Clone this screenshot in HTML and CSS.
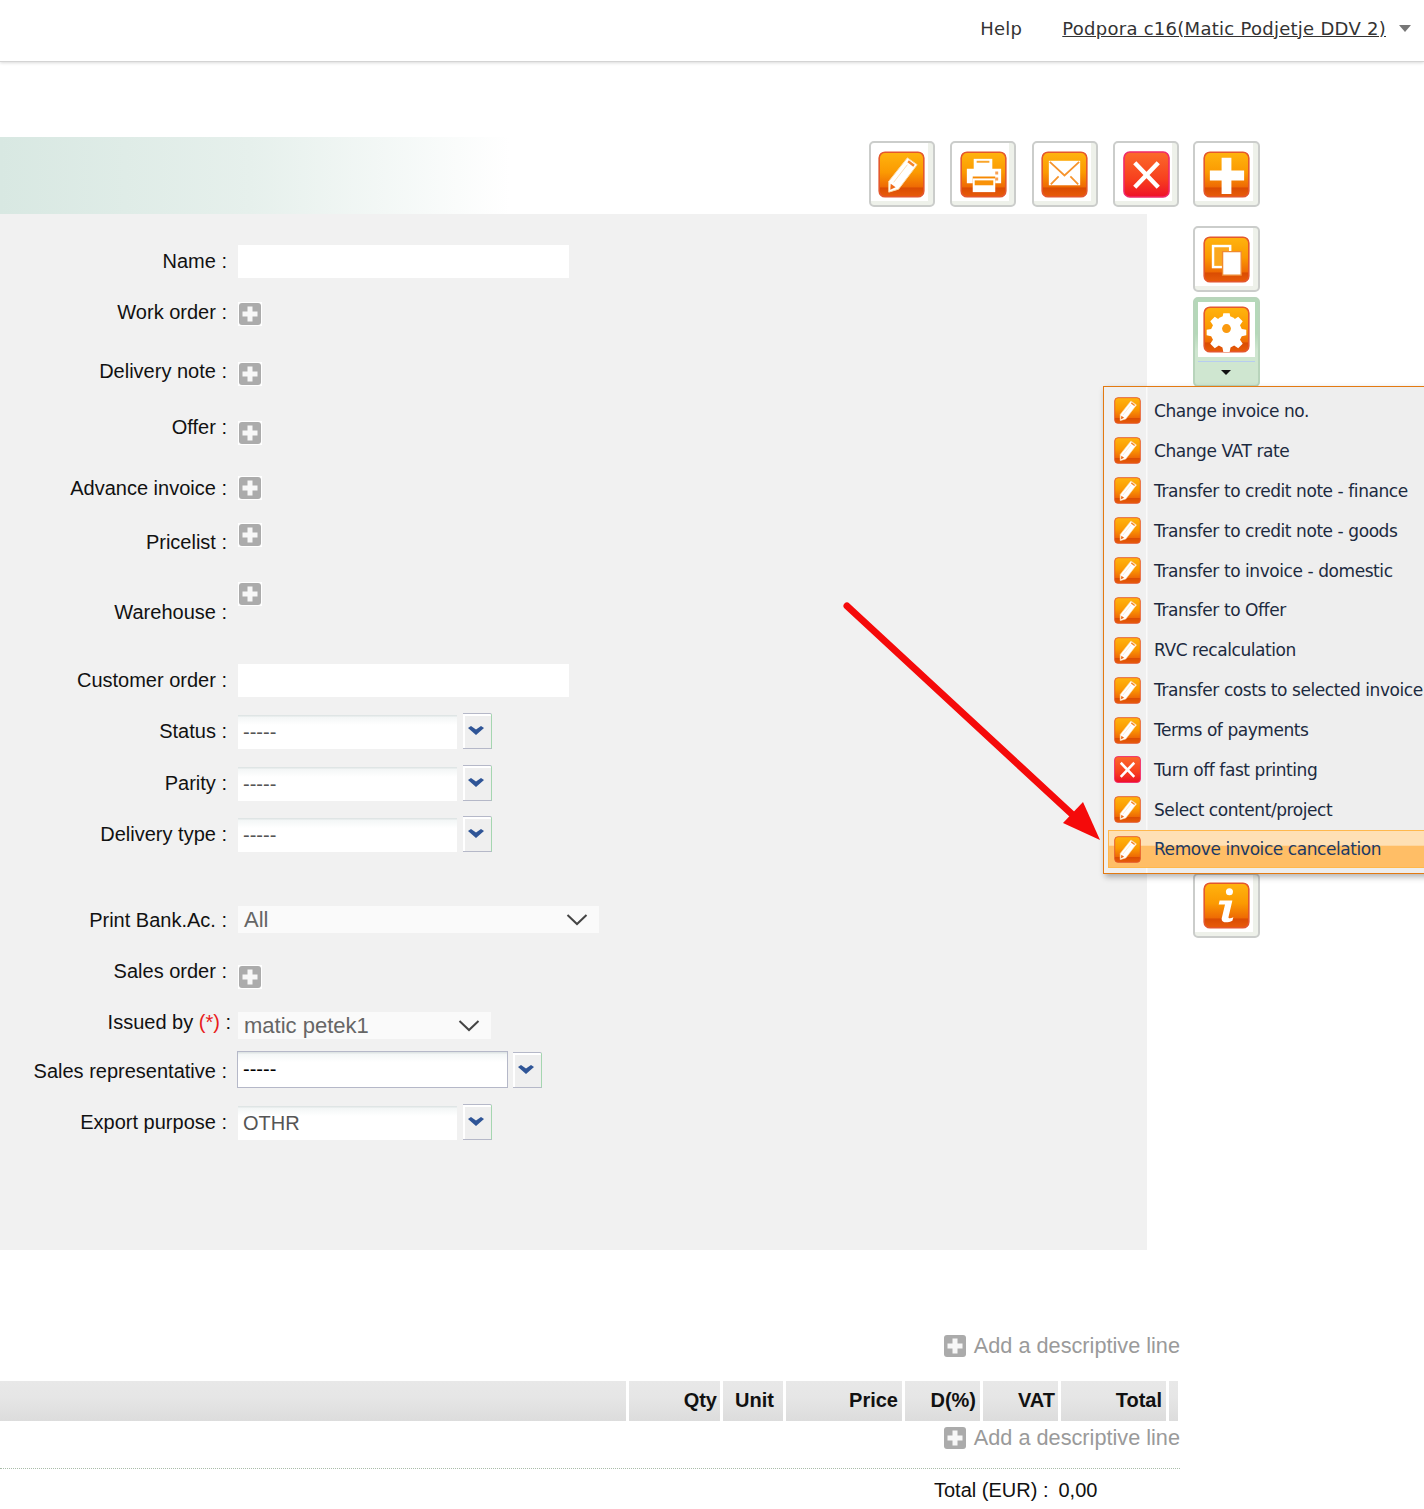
FILE: index.html
```html
<!DOCTYPE html>
<html lang="en">
<head>
<meta charset="utf-8">
<title>Invoice</title>
<link rel="stylesheet" href="styles.css">
</head>
<body>
<svg class="defs" width="0" height="0" aria-hidden="true">
  <defs>
    <linearGradient id="org" x1="0" y1="0" x2="0" y2="1">
      <stop offset="0" stop-color="#ffb40e"/><stop offset=".45" stop-color="#fb9a02"/><stop offset=".78" stop-color="#ee6a04"/><stop offset=".8" stop-color="#da4c02"/><stop offset="1" stop-color="#e85c0a"/>
    </linearGradient>
    <linearGradient id="red" x1="0" y1="0" x2="0" y2="1">
      <stop offset="0" stop-color="#fb6a2a"/><stop offset=".6" stop-color="#f7401e"/><stop offset="1" stop-color="#ee1028"/>
    </linearGradient>
    <symbol id="base" viewBox="0 0 48 48"><rect x="1.2" y="1.2" width="45.6" height="45.6" rx="6" fill="url(#org)" stroke="#e4572c" stroke-width="1.6"/></symbol>
    <symbol id="i-pencil" viewBox="0 0 48 48">
      <use href="#base"/>
      <path d="M30 7l10 7-19 25-10 3 0-11z" fill="#fff" stroke="#fdd9a0" stroke-width="1"/>
      <path d="M31.500 9.500l6 4.500-1.500 2-6-4.500z" fill="#f5862a"/>
      <path d="M13 33.500l5 3.500-5.500 2.500z" fill="#ef6a1a"/>
      <path d="M16 32l14-18" stroke="#fbdcb4" stroke-width="1"/>
    </symbol>
    <symbol id="i-print" viewBox="0 0 48 48">
      <use href="#base"/>
      <path d="M14 8h19v12H14z" fill="#fff"/><path d="M17 10h13v2H17z" fill="#f9a52a"/>
      <path d="M7 18h35v15H36v-7H13v7H7z" fill="#fff"/>
      <path d="M13 28h23v14H13z" fill="#fff"/><path d="M15 30h19v5H15z" fill="#f99208"/>
      <path d="M36 21h3v3h-3zM36 27h3v3h-3z" fill="#f9a052"/>
    </symbol>
    <symbol id="i-mail" viewBox="0 0 48 48">
      <use href="#base"/>
      <rect x="8" y="10" width="32" height="25" fill="#fff"/>
      <path d="M9 11l15 14 15-14M10 34l8-8M38 34l-8-8" fill="none" stroke="#f6932c" stroke-width="1.8"/>
    </symbol>
    <symbol id="i-close" viewBox="0 0 48 48">
      <rect x="1" y="1" width="46" height="46" rx="6" fill="url(#red)" stroke="#f0286a" stroke-width="1.6"/>
      <path d="M12 12l24 25M36 12L12 37" stroke="#fff" stroke-width="4.5" fill="none"/>
    </symbol>
    <symbol id="i-plus" viewBox="0 0 48 48">
      <use href="#base"/>
      <path d="M19 7h10v13h13v10H29v14H19V30H7V20h12z" fill="#fff"/>
    </symbol>
    <symbol id="i-copy" viewBox="0 0 48 48">
      <use href="#base"/>
      <path d="M9 9h20v24H9z" fill="#fff"/>
      <path d="M11.500 11.500h15v19h-15z" fill="#fba81e"/>
      <path d="M20 16h19v24H20z" fill="#fff" stroke="#f08a30" stroke-width="1.400"/>
    </symbol>
    <symbol id="i-gear" viewBox="0 0 48 48">
      <use href="#base"/>
      <circle cx="24" cy="23" r="13" fill="#fff"/>
      <path d="M20.500 7h7l1 5 4 2 4.500-3 5 5-3 4.500 2 4 5 1v6l-5 1-2 4 3 4.500-5 5-4.500-3-4 2-1 5h-7l-1-5-4-2-4.500 3-5-5 3-4.500-2-4-5-1v-6l5-1 2-4-3-4.500 5-5 4.500 3 4-2z" transform="translate(1.900 .9) scale(.92)" fill="#fff"/>
      <circle cx="24" cy="23" r="4.500" fill="#fa9a10"/>
    </symbol>
    <symbol id="i-info" viewBox="0 0 48 48">
      <use href="#base"/>
      <circle cx="27" cy="10" r="3.600" fill="#fff"/>
      <path d="M17 19h13l-4 17c0 1.500 2 1.500 5 0l-1 3.500c-5 2.500-11 2.500-11-2l3.500-14.500H16z" fill="#fff"/>
    </symbol>
    <symbol id="i-gray" viewBox="0 0 24 24">
      <rect width="24" height="24" fill="#fff"/>
      <rect x="1" y="1" width="22" height="22" rx="3" fill="#ababab"/>
      <path d="M9.500 4.500h5v5h5v5h-5v5h-5v-5h-5v-5h5z" fill="#f7f7f7"/>
    </symbol>
    <symbol id="i-down" viewBox="0 0 16 9">
      <path d="M0 2l3-2 5 3.500L13 0l3 2-8 7z" fill="#2f5597"/>
    </symbol>
    <symbol id="i-chev" viewBox="0 0 22 14">
      <path d="M1.500 2L11 11l9.500-9" fill="none" stroke="#444" stroke-width="2"/>
    </symbol>
  </defs>
</svg>

<header class="topbar">
  <span class="help">Help</span>
  <a class="user" href="#">Podpora c16(Matic Podjetje DDV 2)</a>
  <span class="user-caret"></span>
</header>

<section class="band">
  <div class="toolbar">
    <button class="tool"><svg class="tool-icon"><use href="#i-pencil"/></svg></button>
    <button class="tool"><svg class="tool-icon"><use href="#i-print"/></svg></button>
    <button class="tool"><svg class="tool-icon"><use href="#i-mail"/></svg></button>
    <button class="tool"><svg class="tool-icon"><use href="#i-close"/></svg></button>
    <button class="tool tool-wide tool-last"><svg class="tool-icon"><use href="#i-plus"/></svg></button>
  </div>
</section>

<main class="main">
  <form class="panel">
    <div class="row"><label class="lbl">Name :</label><div class="input"></div></div>
    <div class="row r-work"><label class="lbl">Work order :</label><svg class="gray s-d2"><use href="#i-gray"/></svg></div>
    <div class="row r-note"><label class="lbl">Delivery note :</label><svg class="gray s-d3"><use href="#i-gray"/></svg></div>
    <div class="row r-offer"><label class="lbl">Offer :</label><svg class="gray s-d6"><use href="#i-gray"/></svg></div>
    <div class="row r-adv"><label class="lbl">Advance invoice :</label><svg class="gray"><use href="#i-gray"/></svg></div>
    <div class="row r-price"><label class="lbl">Pricelist :</label><svg class="gray s-u7"><use href="#i-gray"/></svg></div>
    <div class="row r-ware"><label class="lbl">Warehouse :</label><svg class="gray s-u18"><use href="#i-gray"/></svg></div>
    <div class="row r-cust"><label class="lbl">Customer order :</label><div class="input"></div></div>
    <div class="row r-status"><label class="lbl">Status :</label><div class="combo"><span class="combo-text">-----</span></div><span class="drop"><svg class="drop-icon"><use href="#i-down"/></svg></span></div>
    <div class="row r-parity"><label class="lbl">Parity :</label><div class="combo"><span class="combo-text">-----</span></div><span class="drop"><svg class="drop-icon"><use href="#i-down"/></svg></span></div>
    <div class="row r-deliv"><label class="lbl">Delivery type :</label><div class="combo"><span class="combo-text">-----</span></div><span class="drop"><svg class="drop-icon"><use href="#i-down"/></svg></span></div>
    <div class="row r-bank"><label class="lbl">Print Bank.Ac. :</label><div class="select select-wide"><span>All</span><svg class="chev"><use href="#i-chev"/></svg></div></div>
    <div class="row r-sales"><label class="lbl">Sales order :</label><svg class="gray s-d6"><use href="#i-gray"/></svg></div>
    <div class="row r-issued"><label class="lbl lbl-req">Issued by <span class="req">(*)</span> :</label><div class="select select-narrow"><span>matic petek1</span><svg class="chev"><use href="#i-chev"/></svg></div></div>
    <div class="row r-rep"><label class="lbl">Sales representative :</label><div class="combo combo-active"><span class="combo-text">-----</span></div><span class="drop drop-up"><svg class="drop-icon"><use href="#i-down"/></svg></span></div>
    <div class="row r-export"><label class="lbl">Export purpose :</label><div class="combo"><span class="combo-text">OTHR</span></div><span class="drop"><svg class="drop-icon"><use href="#i-down"/></svg></span></div>
  </form>
  <aside class="side">
    <button class="tool tool-wide"><svg class="tool-icon"><use href="#i-copy"/></svg></button>
    <button class="tool tool-wide tool-split">
      <span class="split-top"><svg class="tool-icon"><use href="#i-gear"/></svg></span>
      <span class="split-caret"></span>
    </button>
    <button class="tool tool-wide tool-info"><svg class="tool-icon"><use href="#i-info"/></svg></button>
  </aside>
</main>

<section class="items">
  <div class="add add-first"><svg class="add-icon"><use href="#i-gray"/></svg><span>Add a descriptive line</span></div>
  <div class="thead">
    <div class="th th-desc"></div>
    <div class="th th-qty">Qty</div>
    <div class="th th-unit">Unit</div>
    <div class="th th-price">Price</div>
    <div class="th th-disc">D(%)</div>
    <div class="th th-vat">VAT</div>
    <div class="th th-total">Total</div>
    <div class="th th-end"></div>
  </div>
  <div class="add"><svg class="add-icon"><use href="#i-gray"/></svg><span>Add a descriptive line</span></div>
  <div class="dotted"></div>
  <div class="sum"><span>Total (EUR) :</span><span>0,00</span></div>
</section>

<nav class="menu">
  <a class="mi"><svg class="mi-icon"><use href="#i-pencil"/></svg><span>Change invoice no.</span></a>
  <a class="mi"><svg class="mi-icon"><use href="#i-pencil"/></svg><span>Change VAT rate</span></a>
  <a class="mi"><svg class="mi-icon"><use href="#i-pencil"/></svg><span>Transfer to credit note - finance</span></a>
  <a class="mi"><svg class="mi-icon"><use href="#i-pencil"/></svg><span>Transfer to credit note - goods</span></a>
  <a class="mi"><svg class="mi-icon"><use href="#i-pencil"/></svg><span>Transfer to invoice - domestic</span></a>
  <a class="mi"><svg class="mi-icon"><use href="#i-pencil"/></svg><span>Transfer to Offer</span></a>
  <a class="mi"><svg class="mi-icon"><use href="#i-pencil"/></svg><span>RVC recalculation</span></a>
  <a class="mi"><svg class="mi-icon"><use href="#i-pencil"/></svg><span>Transfer costs to selected invoice</span></a>
  <a class="mi"><svg class="mi-icon"><use href="#i-pencil"/></svg><span>Terms of payments</span></a>
  <a class="mi"><svg class="mi-icon"><use href="#i-close"/></svg><span>Turn off fast printing</span></a>
  <a class="mi"><svg class="mi-icon"><use href="#i-pencil"/></svg><span>Select content/project</span></a>
  <a class="mi mi-hover"><svg class="mi-icon"><use href="#i-pencil"/></svg><span>Remove invoice cancelation</span></a>
</nav>

<svg class="arrow" width="270" height="250" viewBox="0 0 270 250">
  <path d="M4 4L232 215" stroke="#f50a0a" stroke-width="7" stroke-linecap="round" fill="none"/>
  <path d="M257 238l-37-17 20-21z" fill="#f50a0a"/>
</svg>
</body>
</html>
```

FILE: styles.css
```css
* { box-sizing: border-box; }
html, body { margin: 0; padding: 0; }
body {
  position: relative;
  width: 1424px;
  height: 1509px;
  overflow: hidden;
  background: #fff;
  color: #111;
  font-family: "Liberation Sans", Arial, sans-serif;
  font-size: 20px;
}
.defs { position: absolute; }

/* top bar */
.topbar {
  height: 62px;
  display: flex;
  align-items: center;
  padding-right: 13px;
  justify-content: flex-end;
  border-bottom: 1px solid #d4d4d4;
  box-shadow: 0 1px 3px rgba(0,0,0,.15);
  font-family: "DejaVu Sans", Verdana, sans-serif;
  font-size: 18px;
  letter-spacing: .27px;
  color: #333;
  padding-bottom: 5px;
}
.help { margin-right: 40px; }
.user { color: #333; text-decoration: underline; }
.user-caret {
  margin-left: 13px;
  border-left: 6px solid transparent;
  border-right: 6px solid transparent;
  border-top: 7px solid #777;
}

/* title band */
.band {
  margin-top: 75px;
  height: 77px;
  padding: 4px 164px 0 0;
  background: linear-gradient(90deg, #d8e8e2 0, #e6f0ec 250px, #fff 510px);
}
.toolbar {
  display: flex;
  justify-content: flex-end;
  gap: 15.5px;
}
.tool {
  display: flex;
  align-items: center;
  justify-content: center;
  flex: none;
  width: 66px;
  height: 66px;
  padding: 0;
  border: 2px solid #cbcdcb;
  border-radius: 5px;
  background: linear-gradient(#fff, #fff) no-repeat 0 0 / calc(100% - 5px) calc(100% - 4px), #eef1ea;
}
.tool-wide { width: 67px; }
.tool-last { margin-left: -1.5px; }
.tool-icon { width: 47px; height: 47px; filter: blur(.4px); }

/* main */
.main { display: flex; height: 1036px; }
.panel {
  width: 1147px;
  height: 1036px;
  padding-top: 30px;
  background: #f1f1f1;
}
.side {
  display: flex;
  flex-direction: column;
  margin-left: 46px;
  padding-top: 12px;
}
.tool-split {
  flex-direction: column;
  justify-content: flex-start;
  height: 90px;
  margin-top: 5px;
  padding: 3px;
  background: linear-gradient(#b5d8b9 0, #b5d8b9 40%, #cfe6d0 60%, #cfe6d0 100%);
  border-color: #b8d4bb;
}
.split-top {
  display: flex;
  align-items: center;
  justify-content: center;
  width: 100%;
  height: 55px;
  background: #fff;
}
.split-caret {
  width: 100%;
  margin-top: 4px;
  height: 1px;
  background: #b7cdf0;
  position: relative;
}
.split-caret::after {
  content: "";
  position: absolute;
  left: 23px;
  top: 9px;
  border-left: 5px solid transparent;
  border-right: 5px solid transparent;
  border-top: 5px solid #111;
}
.tool-info { margin-top: 486px; height: 65px; }

/* form rows */
.row {
  display: flex;
  align-items: center;
  height: 34px;
}
.lbl {
  width: 238px;
  padding-right: 11px;
  text-align: right;
  flex: none;
}
.lbl-req { padding-right: 7px; white-space: nowrap; }
.req { color: #e81c1c; }
.r-work { margin-top: 17px; }
.r-note { margin-top: 25px; }
.r-offer { margin-top: 22px; }
.r-adv { margin-top: 27px; }
.r-price { margin-top: 20px; }
.r-ware { margin-top: 36px; }
.r-cust { margin-top: 34px; }
.r-status { margin-top: 17px; }
.r-parity { margin-top: 18px; }
.r-deliv { margin-top: 17px; }
.r-bank { margin-top: 52px; }
.r-sales { margin-top: 17px; }
.r-issued { margin-top: 17px; }
.r-rep { margin-top: 15px; }
.r-export { margin-top: 17px; }

.input { width: 331px; height: 33px; background: #fff; }
.gray { width: 24px; height: 24px; filter: blur(.5px); }
.s-d2 { margin-top: 4px; }
.s-d3 { margin-top: 6px; }
.s-d6 { margin-top: 12px; }
.s-u7 { margin-top: -14px; }
.s-u18 { margin-top: -36px; }

.combo {
  width: 219px;
  height: 34px;
  padding-left: 5px;
  display: flex;
  align-items: center;
  background: linear-gradient(#dfe5e5 0, #dfe5e5 1px, #f3f6f6 2px, #fff 10px);
  color: #555;
  margin-top: 2px;
}
.combo-active {
  width: 271px;
  height: 37px;
  margin-left: -1px;
  margin-right: -1px;
  margin-top: -3px;
  border: 1px solid #b5b8c8;
  color: #000;
}
.drop {
  width: 29px;
  height: 36px;
  margin-left: 6px;
  display: flex;
  align-items: center;
  justify-content: center;
  padding: 0 2px 1px 0;
  background: #efefef;
  border-top: 1px solid #b5b8c8;
  border-bottom: 1px solid #b5b8c8;
  border-right: 1px solid #a5d6b0;
  border-radius: 0 2px 0 0;
  box-shadow: inset 2px 2px 0 #fff;
}
.drop-up { margin-top: -3px; }
.drop-icon { width: 16px; height: 9px; }
.select {
  height: 27px;
  display: flex;
  align-items: center;
  justify-content: space-between;
  padding: 0 11px 0 6px;
  background: #fafafa;
  color: #666;
  font-size: 22px;
}
.select-wide { width: 361px; margin-top: -2px; padding-top: 2px; }
.select-narrow { width: 253px; margin-top: 7px; }
.chev { width: 22px; height: 14px; }

/* items */
.items { width: 1180px; }
.add {
  height: 30px;
  display: flex;
  align-items: center;
  justify-content: flex-end;
  gap: 7px;
  color: #9a9a9a;
  font-size: 21.7px;
  white-space: nowrap;
}
.add-first { margin-top: 81px; margin-bottom: 20px; }
.add-icon { width: 24px; height: 24px; filter: blur(.5px); }
.thead {
  display: flex;
  gap: 3px;
  height: 40px;
  margin-bottom: 2px;
}
.th {
  height: 40px;
  padding-right: 4px;
  line-height: 38px;
  text-align: right;
  font-weight: 700;
  color: #111;
  background: linear-gradient(#e8e8e8 0, #e6e6e6 40%, #dcdcdc 100%);
}
.th-desc { width: 626px; }
.th-qty { width: 91px; padding-right: 3px; }
.th-unit { width: 60px; padding-right: 9px; }
.th-price { width: 116px; }
.th-disc { width: 75px; }
.th-vat { width: 75px; padding-right: 3px; }
.th-total { width: 105px; }
.th-end { width: 9px; padding: 0; }
.dotted { margin-top: 15px; border-top: 1px dotted #a9bca9; }
.sum {
  display: flex;
  gap: 10px;
  height: 30px;
  margin-top: 6px;
  padding-left: 934px;
  align-items: center;
  white-space: nowrap;
}

/* popup menu */
.menu {
  position: absolute;
  left: 1103px;
  top: 386px;
  width: 340px;
  height: 488px;
  padding: 4px 0 0 4px;
  display: flex;
  flex-direction: column;
  background: linear-gradient(90deg, #f0f0f0 42px, #fafafa 42px, #fafafa 43px, #eee 44px);
  border: 1px solid #e37a12;
  box-shadow: 2px 3px 6px rgba(0,0,0,.3);
  font-family: "DejaVu Sans", Tahoma, sans-serif;
  font-size: 17px;
  letter-spacing: -.43px;
  color: #1c2a40;
}
.mi {
  display: flex;
  align-items: center;
  height: 39.900px;
  padding-left: 6px;
  white-space: nowrap;
}
.mi-icon { width: 27px; height: 27px; margin-right: 13px; flex: none; filter: blur(.4px); }
.mi-hover {
  height: 38px;
  padding-top: 1px;
  border: 1px solid #ffb84d;
  background: linear-gradient(#fee0b5 0, #fee0b5 40%, #ffbe66 41%, #ffbe66 100%);
  padding-left: 5px;
  color: #1c3a66;
}

/* annotation arrow */
.arrow {
  position: absolute;
  left: 843px;
  top: 602px;
}
```
